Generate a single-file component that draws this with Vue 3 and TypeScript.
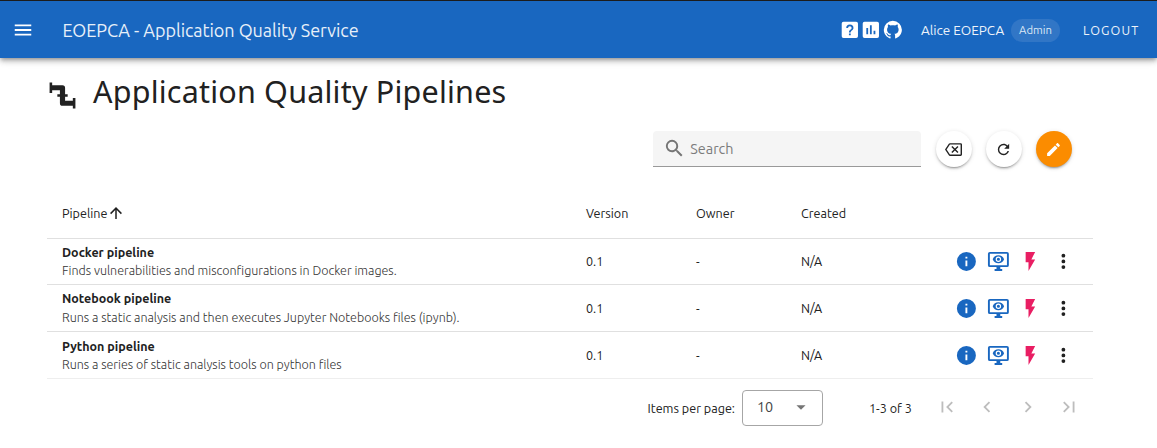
<script setup lang="ts">
interface Pipeline {
  name: string
  description: string
  version: string
  owner: string
  created: string
  kind: string
}

const pipelines: Pipeline[] = [
  { name: 'Docker pipeline', description: 'Finds vulnerabilities and misconfigurations in Docker images.', version: '0.1', owner: '-', created: 'N/A', kind: 'docker' },
  { name: 'Notebook pipeline', description: 'Runs a static analysis and then executes Jupyter Notebooks files (ipynb).', version: '0.1', owner: '-', created: 'N/A', kind: 'notebook' },
  { name: 'Python pipeline', description: 'Runs a series of static analysis tools on python files', version: '0.1', owner: '-', created: 'N/A', kind: 'python' },
]

const pagerIcons: string[] = [
  'M18.41,16.59L13.82,12L18.41,7.41L17,6L11,12L17,18L18.41,16.59M6,6H8V18H6V6Z',
  'M15.41,16.58L10.83,12L15.41,7.41L14,6L8,12L14,18L15.41,16.58Z',
  'M8.59,16.58L13.17,12L8.59,7.41L10,6L16,12L10,18L8.59,16.58Z',
  'M5.59,7.41L10.18,12L5.59,16.59L7,18L13,12L7,6L5.59,7.41M16,6H18V18H16V6Z',
]
</script>

<template>
  <div class="page">
    <header class="bar">
      <svg class="menu" viewBox="0 0 24 24"><path d="M3,6H21V8H3V6M3,11H21V13H3V11M3,16H21V18H3V16Z" /></svg>
      <span class="brand">EOEPCA - Application Quality Service</span>
      <div class="links">
        <svg viewBox="0 0 24 24"><path fill-rule="evenodd" d="M5 3H19A2 2 0 0 1 21 5V19A2 2 0 0 1 19 21H5A2 2 0 0 1 3 19V5A2 2 0 0 1 5 3M11 16V18H13V16H11M12 6A4 4 0 0 0 8 10H10A2 2 0 0 1 12 8A2 2 0 0 1 14 10C14 12 11 11.75 11 15H13C13 12.75 16 12.5 16 10A4 4 0 0 0 12 6Z" /></svg>
        <svg viewBox="0 0 24 24"><path fill-rule="evenodd" d="M5 3H19A2 2 0 0 1 21 5V19A2 2 0 0 1 19 21H5A2 2 0 0 1 3 19V5A2 2 0 0 1 5 3M7 10V17H9V10H7M11 7V17H13V7H11M15 13V17H17V13H15Z" /></svg>
        <svg viewBox="0 0 24 24"><path d="M12,2A10,10 0 0,0 2,12C2,16.42 4.87,20.17 8.84,21.5C9.34,21.58 9.5,21.27 9.5,21C9.5,20.77 9.5,20.14 9.5,19.31C6.73,19.91 6.14,17.97 6.14,17.97C5.68,16.81 5.03,16.5 5.03,16.5C4.12,15.88 5.1,15.9 5.1,15.9C6.1,15.97 6.63,16.93 6.63,16.93C7.5,18.45 8.97,18 9.54,17.76C9.63,17.11 9.89,16.67 10.17,16.42C7.95,16.17 5.62,15.31 5.62,11.5C5.62,10.39 6,9.5 6.65,8.79C6.55,8.54 6.2,7.5 6.75,6.15C6.75,6.15 7.59,5.88 9.5,7.17C10.29,6.95 11.15,6.84 12,6.84C12.85,6.84 13.71,6.95 14.5,7.17C16.41,5.88 17.25,6.15 17.25,6.15C17.8,7.5 17.45,8.54 17.35,8.79C18,9.5 18.38,10.39 18.38,11.5C18.38,15.32 16.04,16.16 13.81,16.41C14.17,16.72 14.5,17.33 14.5,18.26C14.5,19.6 14.5,20.68 14.5,21C14.5,21.27 14.66,21.59 15.17,21.5C19.14,20.16 22,16.42 22,12A10,10 0 0,0 12,2Z" /></svg>
      </div>
      <span class="user">Alice EOEPCA</span>
      <span class="role">Admin</span>
      <span class="logout">LOGOUT</span>
    </header>

    <main class="content">
      <div class="heading">
        <svg class="pipe" viewBox="0 0 24 24"><path d="M22,14H20V16H14V13H16V11H14V6A2,2 0 0,0 12,4H4V2H2V10H4V8H10V11H8V13H10V18A2,2 0 0,0 12,20H20V22H22" /></svg>
        <h1>Application Quality Pipelines</h1>
      </div>

      <div class="tools">
        <div class="search">
          <svg viewBox="0 0 24 24"><path d="M9.5,3A6.5,6.5 0 0,1 16,9.5C16,11.11 15.41,12.59 14.44,13.73L14.71,14H15.5L20.5,19L19,20.5L14,15.5V14.71L13.73,14.44C12.59,15.41 11.11,16 9.5,16A6.5,6.5 0 0,1 3,9.5A6.5,6.5 0 0,1 9.5,3M9.5,5C7,5 5,7 5,9.5C5,12 7,14 9.5,14C12,14 14,12 14,9.5C14,7 12,5 9.5,5Z" /></svg>
          <span>Search</span>
        </div>
        <button class="round"><svg viewBox="0 0 24 24"><path d="M19,15.59L17.59,17L14,13.41L10.41,17L9,15.59L12.59,12L9,8.41L10.41,7L14,10.59L17.59,7L19,8.41L15.41,12L19,15.59M22,3A2,2 0 0,1 24,5V19A2,2 0 0,1 22,21H7C6.31,21 5.77,20.64 5.41,20.11L0,12L5.41,3.88C5.77,3.35 6.31,3 7,3H22M22,5H7L2.28,12L7,19H22V5Z" /></svg></button>
        <button class="round"><svg viewBox="0 0 24 24"><path d="M17.65,6.35C16.2,4.9 14.21,4 12,4A8,8 0 0,0 4,12A8,8 0 0,0 12,20C15.73,20 18.84,17.45 19.73,14H17.65C16.83,16.33 14.61,18 12,18A6,6 0 0,1 6,12A6,6 0 0,1 12,6C13.66,6 15.14,6.69 16.22,7.78L13,11H20V4L17.65,6.35Z" /></svg></button>
        <button class="round edit"><svg viewBox="0 0 24 24"><path d="M20.71,7.04C21.1,6.65 21.1,6 20.71,5.63L18.37,3.29C18,2.9 17.35,2.9 16.96,3.29L15.12,5.12L18.87,8.87M3,17.25V21H6.75L17.81,9.93L14.06,6.18L3,17.25Z" /></svg></button>
      </div>

      <div class="table">
        <div class="row head">
          <div class="sort"><span>Pipeline</span><svg viewBox="0 0 24 24"><path d="M13,20H11V8L5.5,13.5L4.08,12.08L12,4.16L19.92,12.08L18.5,13.5L13,8V20Z" /></svg></div>
          <div>Version</div>
          <div>Owner</div>
          <div>Created</div>
        </div>
        <div v-for="p in pipelines" :key="p.name" class="row item" :class="p.kind">
          <div class="info">
            <strong>{{ p.name }}</strong>
            <span class="desc">{{ p.description }}</span>
          </div>
          <div>{{ p.version }}</div>
          <div>{{ p.owner }}</div>
          <div>{{ p.created }}</div>
          <div class="actions">
            <svg class="blue" viewBox="0 0 24 24"><path d="M13,9H11V7H13M13,17H11V11H13M12,2A10,10 0 0,0 2,12A10,10 0 0,0 12,22A10,10 0 0,0 22,12A10,10 0 0,0 12,2Z" /></svg>
            <svg class="blue" viewBox="0 0 24 24"><path fill-rule="evenodd" d="M3 2H21A2 2 0 0 1 23 4V16A2 2 0 0 1 21 18H14V20H16V22H8V20H10V18H3A2 2 0 0 1 1 16V4A2 2 0 0 1 3 2M3 4V16H21V4H3" /><path fill-rule="evenodd" d="M12 5.5C9.27 5.5 6.94 7.16 6 9.75C6.94 12.34 9.27 14 12 14S17.06 12.34 18 9.75C17.06 7.16 14.73 5.5 12 5.5M12 12.6A2.85 2.85 0 1 1 12 6.9A2.85 2.85 0 0 1 12 12.6M12 8.1A1.65 1.65 0 1 0 12 11.4A1.65 1.65 0 0 0 12 8.1Z" /></svg>
            <svg class="pink" viewBox="0 0 24 24"><path d="M7,2V13H10V22L17,10H13L17,2H7Z" /></svg>
            <svg class="dots" viewBox="0 0 24 24"><path d="M12,16A2,2 0 0,1 14,18A2,2 0 0,1 12,20A2,2 0 0,1 10,18A2,2 0 0,1 12,16M12,10A2,2 0 0,1 14,12A2,2 0 0,1 12,14A2,2 0 0,1 10,12A2,2 0 0,1 12,10M12,4A2,2 0 0,1 14,6A2,2 0 0,1 12,8A2,2 0 0,1 10,6A2,2 0 0,1 12,4Z" /></svg>
          </div>
        </div>
      </div>

      <footer class="pager">
        <span class="per-page">Items per page:</span>
        <div class="select"><span>10</span><svg viewBox="0 0 24 24"><path d="M7,10L12,15L17,10H7Z" /></svg></div>
        <span class="range">1-3 of 3</span>
        <div class="nav"><svg v-for="d in pagerIcons" :key="d" viewBox="0 0 24 24"><path :d="d" /></svg></div>
      </footer>
    </main>
  </div>
</template>

<style>
body { background: #fff; overflow: hidden; }
</style>

<style scoped>
* { box-sizing: border-box; }
.page { width: 1157px; height: 448px; overflow: hidden; color: #212121; font: 12.6px/18px Ubuntu, "Noto Sans", sans-serif; white-space: nowrap; }
svg { display: block; flex: none; fill: currentColor; }
.bar { height: 58px; border-top: 1px solid #1c1c1c; background: #1967c0; color: #fff; display: flex; align-items: center; padding: 1px 0 0 12px; box-shadow: 0 2px 4px -1px rgba(0,0,0,.3), 0 4px 5px rgba(0,0,0,.14), 0 1px 10px rgba(0,0,0,.12); }
.menu { width: 22px; height: 22px; }
.brand { width: 776px; margin-left: 28.5px; font-size: 18px; line-height: 26px; letter-spacing: -.04px; color: #e8f0f9; }
.links { display: flex; width: 82.5px; }
.links svg { width: 21.7px; height: 21.7px; }
.user { width: 90px; font-size: 13.5px; color: #edf3fa; }
.role { width: 49px; height: 23px; border-radius: 12px; background: #3176c6; display: flex; align-items: center; justify-content: center; font-size: 11.3px; color: #dce8f5; }
.logout { margin-left: 23px; font-size: 12.6px; letter-spacing: 1.13px; color: #edf3fa; }
.content { padding: 0 64px 0 47px; }
.heading { display: flex; align-items: center; height: 73px; }
.pipe { width: 31px; height: 31px; margin-top: 1px; }
h1 { margin: -7px 0 0 15px; font: 400 30.5px/40px "Noto Sans", sans-serif; letter-spacing: .21px; }
.tools { display: flex; height: 36px; padding-left: 606px; }
.search { width: 268px; height: 36px; margin-right: 15px; background: #f5f5f5; border-bottom: 1px solid #999; border-radius: 4px 4px 0 0; display: flex; align-items: center; gap: 4.5px; padding-left: 10px; color: #7c7c7c; font-size: 14.4px; }
.search svg { width: 22.8px; height: 22.8px; color: #757575; }
.round { width: 36px; height: 36px; margin-right: 14px; padding: 0 1px 0 0; border: 0; border-radius: 50%; background: #fff; color: #222; display: flex; align-items: center; justify-content: center; box-shadow: 0 3px 1px -2px rgba(0,0,0,.2), 0 2px 2px rgba(0,0,0,.14), 0 1px 5px rgba(0,0,0,.12); }
.round svg { width: 17px; height: 17px; }
.edit { background: #fb8c00; color: #fff; }
.table { margin-top: 20px; }
.row { display: grid; grid-template-columns: 524px 110px 105px 153px 1fr; align-items: center; padding-left: 15px; border-bottom: 1px solid #e0e0e0; }
.head { height: 52px; }
.sort { display: flex; align-items: center; }
.sort svg { width: 18px; height: 18px; }
.item { height: 47px; }
.item.docker { height: 46px; padding-bottom: 1px; }
.item.python { border-color: #eee; }
.info { display: flex; flex-direction: column; font-size: 12.5px; }
.info strong { line-height: 18px; }
.docker .info { padding-top: 1px; }
.notebook .info strong { line-height: 17px; padding-bottom: 1px; }
.desc { font-weight: 300; color: #333; line-height: 19px; }
.actions { display: flex; gap: 9.5px; padding-left: .8px; }
.actions svg { width: 22.8px; height: 22.8px; }
.blue { color: #1967c0; }
.pink { color: #e91e63; }
.pager { display: flex; align-items: center; height: 57px; padding-left: 600.5px; }
.per-page { width: 94.5px; }
.select { width: 81px; height: 36px; border: 1px solid #a6a6a6; border-radius: 4px; display: flex; align-items: center; justify-content: space-between; padding: 0 10px 1px 14px; font-size: 14.4px; color: #444; }
.select svg { width: 22px; height: 22px; color: #757575; }
.range { width: 66.5px; margin-left: 46px; }
.nav { display: flex; gap: 18.8px; margin-top: -2px; color: #bdbdbd; }
.nav svg { width: 22px; height: 22px; }
</style>
